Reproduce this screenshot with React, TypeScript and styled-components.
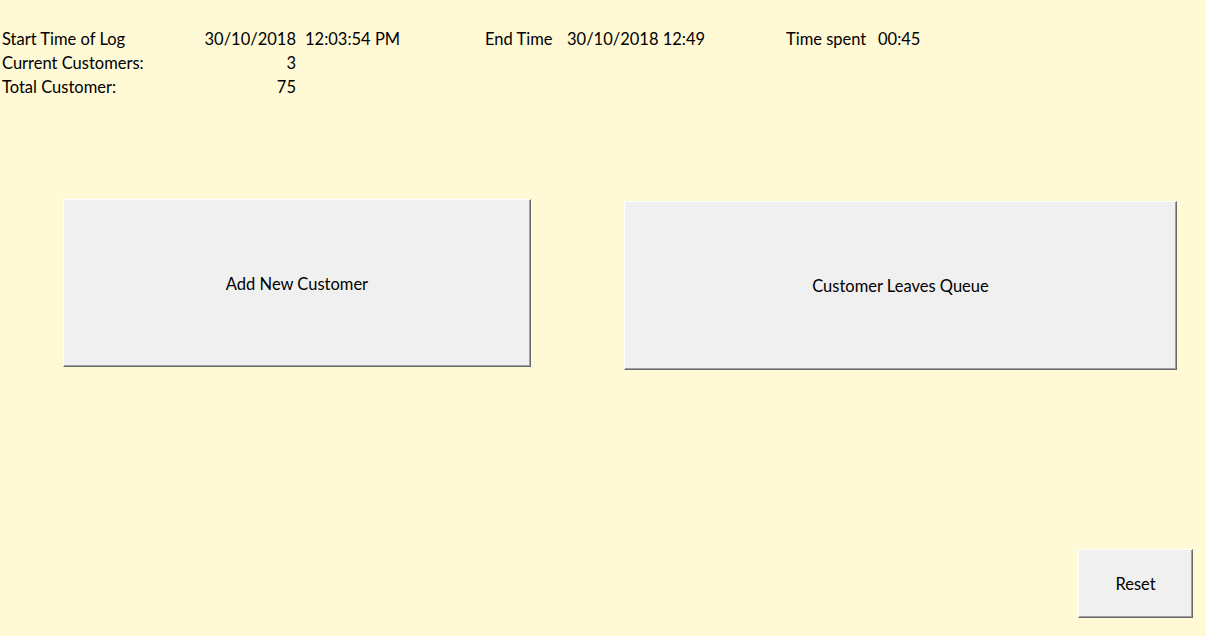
import React, { FC } from 'react';
import styled, { createGlobalStyle } from 'styled-components';

const GlobalStyle = createGlobalStyle`
  body {
    margin: 0;
    background: #fff9d5;
    font-family: Lato, 'Open Sans', sans-serif;
    color: #000;
  }
`;

const Page = styled.div`
  width: 1206px;
  height: 636px;
  overflow: hidden;
  background: #fff9d5;
`;

const LogGrid = styled.div`
  display: grid;
  grid-template-columns: 198px 96px 189px 82px 219px 92px 1fr;
  grid-auto-rows: 24px;
  padding: 27px 0 0 2px;
  font-size: 16.5px;
  line-height: 24px;
`;

const Cell = styled.div<{ $align?: 'left' | 'right'; $indent?: number }>`
  white-space: nowrap;
  text-align: ${(p) => p.$align ?? 'left'};
  padding-left: ${(p) => p.$indent ?? 0}px;
`;

const ButtonRow = styled.div`
  display: flex;
  align-items: flex-start;
  gap: 93px;
  padding-left: 63px;
`;

const SheetButton = styled.button<{ $w: number; $h: number; $top: number }>`
  display: flex;
  align-items: center;
  justify-content: center;
  box-sizing: border-box;
  width: ${(p) => p.$w}px;
  height: ${(p) => p.$h}px;
  margin-top: ${(p) => p.$top}px;
  padding: 1px 0 0;
  background: #f0f0f0;
  border: 1px solid;
  border-color: #ffffff #696969 #696969 #ffffff;
  box-shadow: inset -1px -1px 0 #a0a0a0;
  font-family: Lato, 'Open Sans', sans-serif;
  font-size: 16.5px;
  color: #000;
  cursor: pointer;
`;

const Footer = styled.div`
  display: flex;
  justify-content: flex-end;
  padding-right: 13px;
`;

const App: FC = () => {
  return (
    <Page>
      <GlobalStyle />
      <LogGrid>
        <Cell>Start Time of Log</Cell>
        <Cell $align="right">30/10/2018</Cell>
        <Cell $indent={9}>12:03:54 PM</Cell>
        <Cell>End Time</Cell>
        <Cell>30/10/2018 12:49</Cell>
        <Cell>Time spent</Cell>
        <Cell>00:45</Cell>

        <Cell>Current Customers:</Cell>
        <Cell $align="right">3</Cell>
        <Cell />
        <Cell />
        <Cell />
        <Cell />
        <Cell />

        <Cell>Total Customer:</Cell>
        <Cell $align="right">75</Cell>
      </LogGrid>
      <ButtonRow>
        <SheetButton $w={468} $h={168} $top={100}>
          Add New Customer
        </SheetButton>
        <SheetButton $w={553} $h={169} $top={102}>
          Customer Leaves Queue
        </SheetButton>
      </ButtonRow>
      <Footer>
        <SheetButton $w={115} $h={69} $top={179}>
          Reset
        </SheetButton>
      </Footer>
    </Page>
  );
};

export default App;
